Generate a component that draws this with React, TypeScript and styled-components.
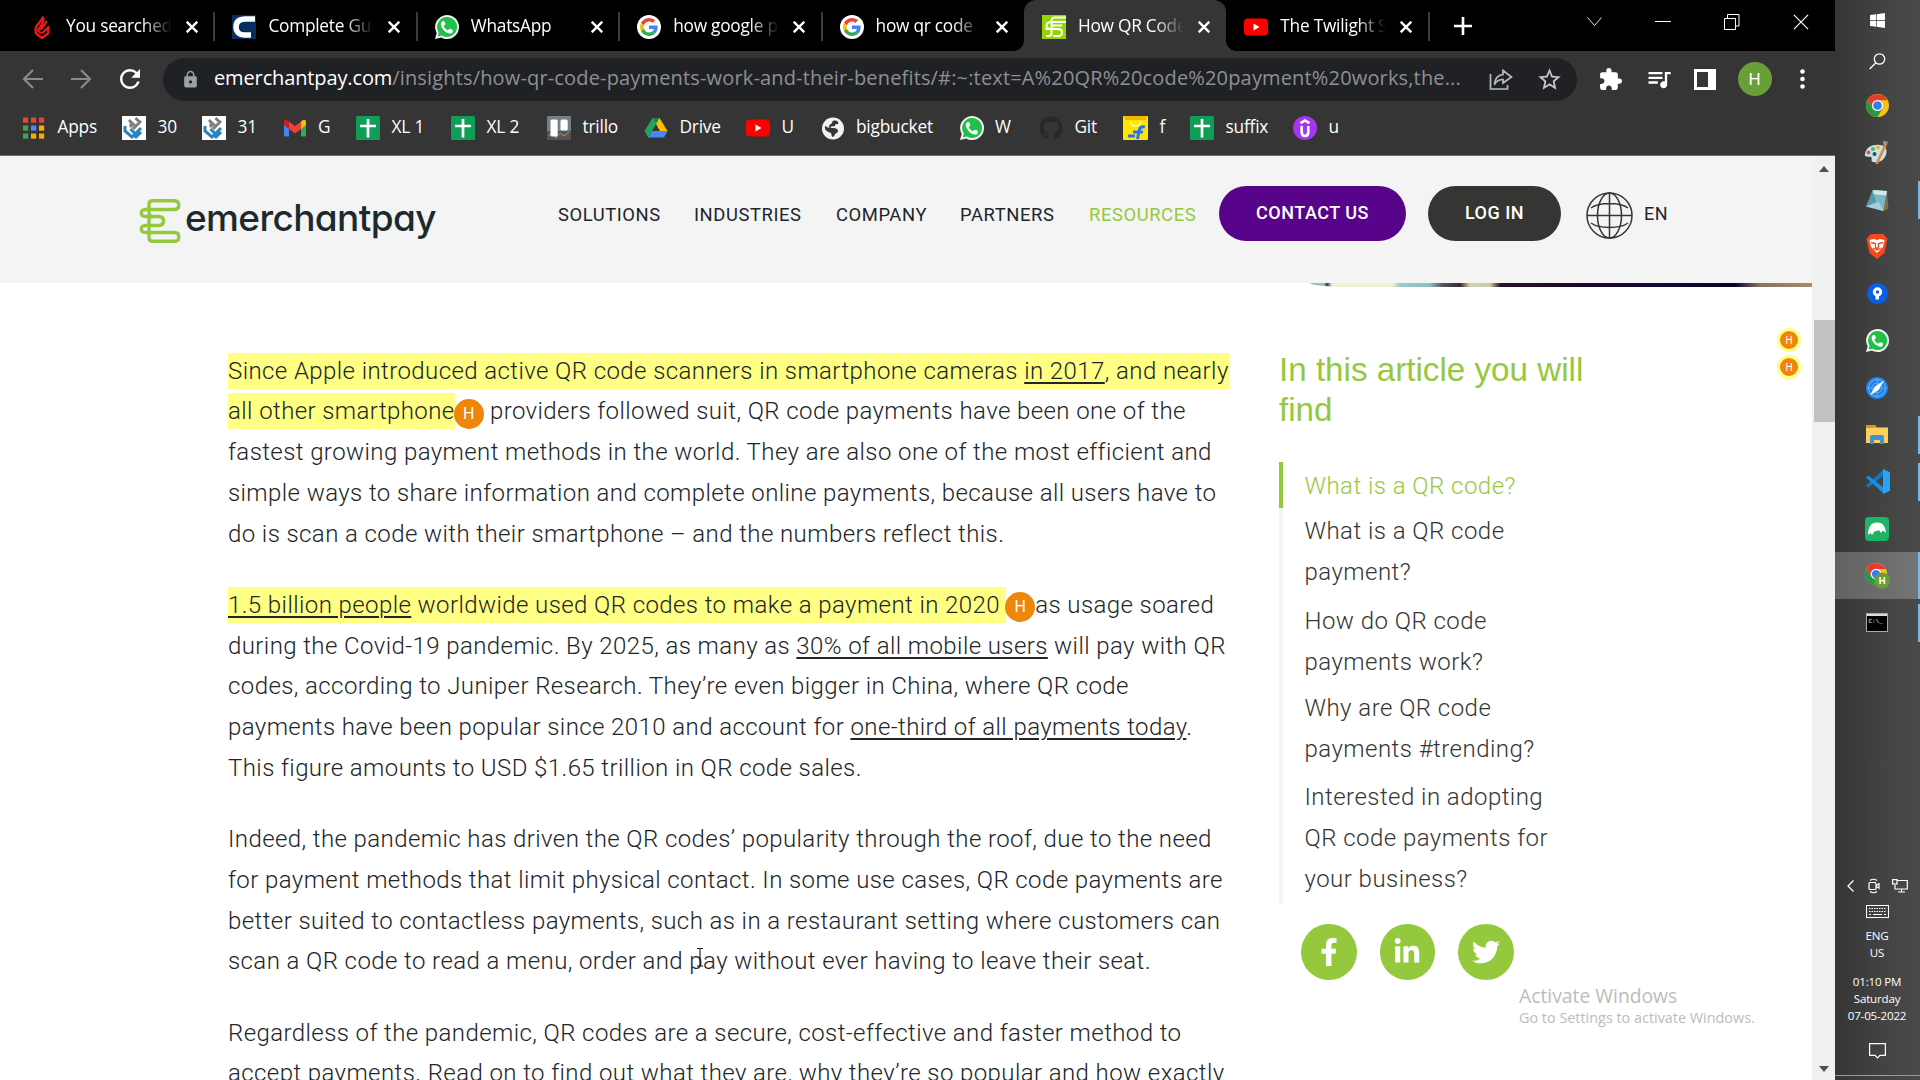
import React from "react";
import styled, { createGlobalStyle, css } from "styled-components";
import { FaFacebookF, FaLinkedinIn, FaTwitter, FaGithub, FaWindows } from "react-icons/fa";
import { MdExtension, MdQueueMusic, MdLock, MdStarBorder, MdRefresh } from "react-icons/md";

const ui = `"Open Sans", "Noto Sans", sans-serif`;
const web = `Roboto, "Liberation Sans", sans-serif`;
const green = "#95c93d";

const GlobalStyle = createGlobalStyle`
  html, body { margin: 0; padding: 0; overflow: hidden; background: #fff; }
  *, *::before, *::after { box-sizing: border-box; }
  svg { display: block; flex: none; }
`;

const Desktop = styled.div`
  display: flex;
  width: 1920px;
  height: 1080px;
  overflow: hidden;
`;

const Browser = styled.div`
  display: flex;
  flex-direction: column;
  width: 1835px;
  height: 1080px;
  flex: none;
`;

/* ---------- Tab strip ---------- */

const TabStrip = styled.div`
  display: flex;
  height: 51px;
  flex: none;
  padding-left: 12px;
  background: #000;
  color: #fff;
  font-family: ${ui};
`;

const Tab = styled.div<{ $active?: boolean; $line?: boolean }>`
  position: relative;
  display: flex;
  align-items: center;
  width: 202.4px;
  height: 51px;
  padding: 2px 0 0 18px;
  flex: none;
  border-radius: 12px 12px 0 0;
  ${(p) =>
    p.$line &&
    css`
      &::after {
        content: "";
        position: absolute;
        right: -1px;
        top: 12px;
        width: 2px;
        height: 29px;
        background: #3c3c3c;
      }
    `}
  ${(p) =>
    p.$active &&
    css`
      background: #353535;
      &::before {
        content: "";
        position: absolute;
        left: -10px;
        right: -10px;
        bottom: 0;
        height: 10px;
        background:
          radial-gradient(circle at 0 0, transparent 9.5px, #353535 10px) left / 10px 10px no-repeat,
          radial-gradient(circle at 100% 0, transparent 9.5px, #353535 10px) right / 10px 10px no-repeat;
      }
    `}
`;

const TabTitle = styled.span`
  width: 106px;
  margin: 0 14px 3px 12px;
  flex: none;
  white-space: nowrap;
  font-size: 17.3px;
  letter-spacing: -0.25px;
  mask-image: linear-gradient(90deg, #000 72%, transparent 100%);
`;

const NewTab = styled.div`
  display: flex;
  align-items: center;
  margin-left: 25px;
`;

const WindowButtons = styled.div`
  display: flex;
  align-items: center;
  gap: 53px;
  height: 43px;
  margin-left: auto;
  padding-right: 26px;
`;

/* ---------- Toolbar ---------- */

const Toolbar = styled.div`
  display: flex;
  align-items: center;
  height: 55px;
  flex: none;
  padding: 1px 0 0 22px;
  background: #353535;
`;

const NavButtons = styled.div`
  display: flex;
  align-items: center;
  gap: 26px;
  width: 141px;

  & > :last-child {
    margin-left: -3px;
  }
`;

const AddressBar = styled.div`
  display: flex;
  align-items: center;
  width: 1414px;
  height: 43px;
  padding: 0 14px 0 18px;
  border-radius: 22px;
  background: #202124;
  color: #9aa0a6;
`;

const Url = styled.div`
  width: 1254px;
  margin: 0 0 3px 14px;
  white-space: nowrap;
  font-family: ${ui};
  font-size: 20px;
  letter-spacing: 0.16px;
  color: #8d9094;
`;

const Domain = styled.span`
  color: #fff;
  letter-spacing: -0.13px;
`;

const AddressActions = styled.div`
  display: flex;
  align-items: center;
  gap: 23px;
  margin-left: auto;
`;

const ToolbarActions = styled.div`
  display: flex;
  align-items: center;
  gap: 21.5px;
  margin-left: 21px;
`;

const Avatar = styled.div`
  display: flex;
  align-items: center;
  justify-content: center;
  width: 34px;
  height: 34px;
  margin-right: 7px;
  border-radius: 50%;
  background: #689f38;
  color: #fff;
  font: 17px ${web};
`;

/* ---------- Bookmarks ---------- */

const BookmarkBar = styled.div`
  display: flex;
  align-items: center;
  height: 50px;
  flex: none;
  padding: 0 0 6px 22px;
  border-bottom: 1px solid #736a6c;
  background: #353535;
  color: #fff;
  font-family: ${ui};
  font-size: 17.3px;
`;

const Bookmark = styled.div<{ $width: number }>`
  display: flex;
  align-items: center;
  gap: 11.5px;
  width: ${(p) => p.$width}px;
  flex: none;
  white-space: nowrap;
  letter-spacing: -0.2px;
  span { margin-bottom: 2px; }
`;

/* ---------- Page ---------- */

const Viewport = styled.div`
  display: flex;
  height: 924px;
`;

const Page = styled.div`
  width: 1812px;
  height: 924px;
  overflow: hidden;
  background: #fff;
  font-family: ${web};
`;

const SiteHeader = styled.header`
  display: flex;
  height: 127px;
  padding-left: 139px;
  background: #f4f4f4;
`;

const Brand = styled.div`
  display: flex;
  align-items: flex-start;
  width: 419px;
  padding-top: 43px;
`;

const BrandName = styled.span`
  margin: -3px 0 0 4px;
  color: #1d2a2d;
  font: 500 37px/44px Inter, sans-serif;
  font-feature-settings: "cv11", "ss03";
  letter-spacing: -0.62px;
`;

const SiteNav = styled.nav`
  display: flex;
  padding-top: 47px;
  color: #212529;
  font-size: 18.4px;
  line-height: 24px;
  letter-spacing: 0.58px;
`;

const NavLink = styled.a<{ $width: number; $current?: boolean }>`
  width: ${(p) => p.$width}px;
  white-space: nowrap;
  ${(p) => p.$current && `color: ${green};`}
`;

const PillButton = styled.button<{ $width: number; $tone: string }>`
  width: ${(p) => p.$width}px;
  height: 55px;
  margin: 30px 22px 0 0;
  padding: 0 0 2px;
  border: 0;
  border-radius: 28px;
  background: ${(p) => p.$tone};
  color: #fff;
  font: 500 18px ${web};
  letter-spacing: 0.5px;
`;

const Language = styled.div`
  display: flex;
  align-items: center;
  gap: 11px;
  height: 48px;
  margin: 35px 0 0 3px;
  color: #212529;
  font-size: 18px;
  letter-spacing: 0.4px;
  span { margin-bottom: 4px; }
`;

const HeroEdge = styled.div`
  width: 502px;
  height: 4px;
  margin-left: 1310px;
  border-bottom-left-radius: 40px 4px;
  background: linear-gradient(
    90deg,
    #8fc4bd 0, #8fc4bd 14px, #283858 17px, #eef3cf 22px, #eef3cf 82px, #96cdc9 90px,
    #8cbcc0 120px, #5a5560 132px, #3c2832 150px, #cfd3ac 160px, #c9cba6 180px,
    #2b1428 190px, #1c0c28 260px, #160838 350px, #0d0226 425px, #8a7460 450px, #a48b68 502px
  );
`;

const Columns = styled.div`
  display: flex;
  padding: 63.5px 0 0 228px;
`;

const Article = styled.article`
  width: 1051px;
  flex: none;
  color: #212529;
  font-size: 24px;
  font-weight: 300;
  line-height: 40.8px;
  letter-spacing: 0.41px;
  white-space: nowrap;
`;

const Paragraph = styled.p`
  margin: 0 0 30.3px;
`;

const Mark = styled.mark`
  padding: 4px 0;
  background: #ffff83;
  color: inherit;
`;

const TextLink = styled.a`
  text-decoration: underline;
  text-decoration-thickness: 2px;
  text-underline-offset: 3px;
`;

const InlineBadge = styled.span`
  display: inline-flex;
  align-items: center;
  justify-content: center;
  width: 30px;
  height: 30px;
  margin: -6px 0 -6px -1px;
  border-radius: 50%;
  background: #ee8609;
  color: #fff;
  font: 16px/30px ${web};
  letter-spacing: 0;
  vertical-align: 0.5px;
`;

const Sidebar = styled.aside`
  width: 330px;
`;

const SidebarTitle = styled.h2`
  margin: -1px 0 32px;
  color: ${green};
  font: 400 33.2px/40px "Liberation Sans", Arial, sans-serif;
  white-space: nowrap;
`;

const Contents = styled.ul`
  margin: 0;
  padding: 0;
  list-style: none;
`;

const ContentsItem = styled.li<{ $current?: boolean; $bottom?: number }>`
  padding: ${(p) => (p.$current ? "4.4px" : "3px")} 0 ${(p) => p.$bottom ?? 1.5}px 21.5px;
  border-left: 4px solid ${(p) => (p.$current ? green : "#f3f3f3")};
  color: ${(p) => (p.$current ? green : "#353633")};
  font-size: 24px;
  font-weight: 300;
  line-height: 41px;
  letter-spacing: 0.46px;
  white-space: nowrap;
`;

const Socials = styled.div`
  display: flex;
  gap: 23px;
  padding: 20px 0 0 22px;
`;

const SocialButton = styled.a`
  display: flex;
  align-items: center;
  justify-content: center;
  width: 55.5px;
  height: 55.5px;
  border-radius: 50%;
  background: ${green};
  color: #fff;
`;

const Activation = styled.div`
  position: absolute;
  left: 1519px;
  top: 982px;
  color: #bcbcbc;
  font-family: ${ui};
  font-size: 19.3px;
  line-height: 27px;
  white-space: nowrap;
`;

const ActivationHint = styled.div`
  font-size: 14.4px;
  line-height: 18px;
`;

const AnnotationRail = styled.div`
  position: absolute;
  left: 1777px;
  top: 328px;
  display: flex;
  flex-direction: column;
  gap: 3px;
`;

const RailBadge = styled.div`
  display: flex;
  align-items: center;
  justify-content: center;
  width: 24px;
  height: 24px;
  border: 3px solid #ffff83;
  border-radius: 50%;
  background: #ee8609;
  color: #fff;
  font: 10px ${web};
`;

const TextCursor = styled.svg`
  position: absolute;
  left: 696px;
  top: 948px;
`;

const Scrollbar = styled.div`
  display: flex;
  flex-direction: column;
  align-items: center;
  width: 23px;
  padding: 10px 0 8px 1px;
  background: #f1f1f1;
`;

const Thumb = styled.div`
  width: 21px;
  height: 102px;
  margin: 148px 0 auto 1px;
  background: #c1c1c1;
`;

/* ---------- Taskbar ---------- */

const Taskbar = styled.div`
  display: flex;
  flex-direction: column;
  width: 85px;
  height: 1080px;
  flex: none;
  background: linear-gradient(90deg, #353535, #444 60%, #494949);
  color: #fff;
  font-family: ${ui};
`;

const Slot = styled.div<{ $height?: number; $open?: boolean; $active?: boolean }>`
  display: grid;
  grid-template-columns: 1fr auto 1fr;
  align-items: center;
  height: ${(p) => p.$height ?? 47}px;
  flex: none;
  ${(p) => p.$active && "background: linear-gradient(90deg, #626262, #757575);"}

  & > svg {
    grid-column: 2;
    margin-right: 1px;
  }

  ${(p) =>
    p.$open &&
    css`
      &::after {
        content: "";
        grid-column: 3;
        justify-self: end;
        width: 2px;
        height: ${p.$active ? 47 : 38}px;
        background: #76b9ed;
      }
    `}
`;

const Tray = styled.div`
  display: flex;
  flex-direction: column;
  align-items: center;
  height: 204px;
  margin-top: auto;
  border-bottom: 1px solid #9a9a9a;
  font-size: 11.6px;
  line-height: 17px;
  letter-spacing: -0.2px;
  text-align: center;
`;

const TrayRow = styled.div`
  display: flex;
  align-items: center;
  gap: 14px;
  height: 28px;
  margin: 0 0 5px;

  & > :last-child {
    margin-left: -2px;
  }
`;

const Clock = styled.div<{ $gap?: number }>`
  margin: ${(p) => p.$gap ?? 13}px 1px 0 0;
  white-space: nowrap;
`;

const ActionCenter = styled.svg`
  margin-top: 19px;
`;

const BottomEdge = styled.div`
  height: 4px;
  flex: none;
`;

/* ---------- Icons ---------- */

const Cross = ({ size = 12, width = 2.4 }: { size?: number; width?: number }) => (
  <svg width={size} height={size} viewBox="0 0 12 12">
    <path d="M.7.7l10.6 10.6M11.3.7L.7 11.3" stroke="#fff" strokeWidth={width} />
  </svg>
);

const Flame = () => (
  <svg width="24" height="24" viewBox="0 0 24 24" fill="none" stroke="#e8191f" strokeWidth="2.3" strokeLinejoin="round">
    <path d="M12.500 1.500C13.500 6 5.500 8.500 5.500 15l.5 3.500 6 4.500 6-4.500.5-6.500-6.500 6.500M12.500 1.500c1.500 3 1.500 5-.5 7.500l-4 6.500 3 3M16 6c1 3-5 6-5 9" />
  </svg>
);

const CLetter = () => (
  <svg width="24" height="24" viewBox="0 0 24 24">
    <rect width="24" height="24" fill="#062f60" />
    <path d="M23 4H13.500C7 4 4 7 4 12s3.500 8 8.500 8H19" fill="none" stroke="#fff" strokeWidth="5.500" />
  </svg>
);

const WhatsApp = ({ size = 24 }: { size?: number }) => (
  <svg width={size} height={size} viewBox="0 0 24 24">
    <path d="M12 0a12 12 0 0 1 0 24c-2 0-4-.5-5.700-1.500L0 24l1.700-6A12 12 0 0 1 12 0z" fill="#f4f4f4" />
    <path d="M12 2a10 10 0 1 1-5.200 18.500L2.700 21.500l1.100-4A10 10 0 0 1 12 2z" fill="#20c04a" />
    <path
      transform="translate(4.600 4.600) scale(.62)"
      d="M6.600 10.800c1.400 2.800 3.800 5.100 6.600 6.600l2.200-2.200c.3-.3.7-.4 1-.2 1.100.4 2.300.6 3.600.6.6 0 1 .4 1 1V20c0 1.500-2 2.500-4 2.500C10.600 22.500 2 14 2 7c0-2 1.500-4.500 3-4.500h2c.6 0 1 .4 1.200 1 .2 1.300.6 2.500 1 3.600.1.300 0 .7-.2 1z"
      fill="#fff"
    />
  </svg>
);

const Google = () => (
  <svg width="24" height="24" viewBox="0 0 24 24">
    <circle cx="12" cy="12" r="12" fill="#fff" />
    <g transform="translate(3 3) scale(.375)">
      <path fill="#EA4335" d="M24 9.500c3.540 0 6.710 1.220 9.210 3.600l6.850-6.850C35.900 2.380 30.470 0 24 0 14.620 0 6.510 5.380 2.560 13.220l7.980 6.190C12.430 13.720 17.740 9.500 24 9.500z" />
      <path fill="#4285F4" d="M46.980 24.550c0-1.570-.15-3.090-.38-4.550H24v9.020h12.940c-.58 2.960-2.260 5.480-4.780 7.180l7.730 6c4.510-4.180 7.090-10.360 7.090-17.650z" />
      <path fill="#FBBC05" d="M10.530 28.590c-.48-1.450-.76-2.990-.76-4.590s.27-3.140.76-4.590l-7.980-6.190C.92 16.460 0 20.120 0 24c0 3.880.92 7.540 2.560 10.780l7.970-6.190z" />
      <path fill="#34A853" d="M24 48c6.480 0 11.930-2.130 15.890-5.810l-7.730-6c-2.150 1.450-4.920 2.300-8.160 2.300-6.260 0-11.570-4.220-13.470-9.910l-7.980 6.190C6.510 42.620 14.620 48 24 48z" />
    </g>
  </svg>
);

const EmpMark = () => (
  <svg width="24" height="24" viewBox="0 0 24 24">
    <rect width="24" height="24" fill="#95d600" />
    <path
      d="M24 2.500H13q-3.500 0-3.500 3V18q0 3-3 3H4M24 7H9q-4.500 0-4.500 3.500T9 14h7q4 0 4 3.500T16 21H11M20 10.500H9M16 14H3"
      fill="none"
      stroke="#fff"
      strokeWidth="2"
    />
  </svg>
);

const YouTube = () => (
  <svg width="24" height="24" viewBox="0 0 24 24">
    <rect y="3.500" width="24" height="17" rx="4" fill="#f00" />
    <path d="M9.500 8.500v7l6-3.500z" fill="#fff" />
  </svg>
);

const AppsGrid = () => (
  <svg width="24" height="24" viewBox="0 0 24 24">
    {["#ea4335", "#ea4335", "#ea4335", "#34a853", "#4c8bf5", "#f9ab00", "#34a853", "#f9ab00", "#f9ab00"].map((c, i) => (
      <rect key={i} x={1 + (i % 3) * 8} y={1.500 + Math.floor(i / 3) * 8} width="5.200" height="5.200" fill={c} />
    ))}
  </svg>
);

const Hacker = () => (
  <svg width="24" height="24" viewBox="0 0 24 24" fill="none" strokeWidth="3">
    <rect width="24" height="24" fill="#fff" />
    <path d="M7 4l6 6M11 13l8-8M13.500 2l4.500 4.500M9 6.500v5" stroke="#7b8084" />
    <path d="M3 10v5l7 6 9-9M8.500 13l4 4M15 14l3 3-5 5" stroke="#2f7fb8" />
  </svg>
);

const Gmail = () => (
  <svg width="24" height="24" viewBox="0 0 24 24">
    <path d="M1 8v11q0 1.500 1.500 1.500H6V11z" fill="#4285f4" />
    <path d="M23 8v11q0 1.500-1.500 1.500H18V11z" fill="#34a853" />
    <path d="M18 5.500l2-1.500q3-1 3 2v3l-5 4z" fill="#fbbc04" />
    <path d="M6 5.500L4 4Q1 3 1 6v3l5 4z" fill="#c5221f" />
    <path d="M6 5.500l6 4.600 6-4.600V13l-6 4.500L6 13z" fill="#ea4335" />
  </svg>
);

const Sheet = () => (
  <svg width="24" height="24" viewBox="0 0 24 24">
    <rect width="24" height="24" rx="1.500" fill="#109d58" />
    <path d="M12 3v18.500M4 10h16" stroke="#fff" strokeWidth="2.700" />
  </svg>
);

const Trello = () => (
  <svg width="24" height="24" viewBox="0 0 24 24">
    <rect width="24" height="24" rx="1" fill="#71808a" />
    <path d="M0 15h24v9H0z" fill="#59514e" />
    <path d="M2 20l3-4 4 6 4-5 4 3 5-4" stroke="#a49a94" fill="none" />
    <rect x="3.500" y="3.500" width="7.200" height="17" rx="1.500" fill="#fff" />
    <rect x="13.500" y="3.500" width="7.200" height="11" rx="1.500" fill="#fff" />
  </svg>
);

const Drive = () => (
  <svg width="24" height="24" viewBox="0 0 24 24">
    <path d="M8.500 2h7L8 15l-3.800 6.500L.5 15z" fill="#1fa463" />
    <path d="M8.500 2h7l8 13h-7.500z" fill="#ffbf00" />
    <path d="M8.500 2L12 8l3.500-6z" fill="#14884c" />
    <path d="M8 15h15.500L20 21.500H4.200z" fill="#4688f4" />
  </svg>
);

const Globe = () => (
  <svg width="24" height="24" viewBox="0 0 24 24">
    <circle cx="12" cy="12.500" r="11" fill="#f2f2f2" />
    <path d="M13 4.500c4 0 5 2 4 3.500-2 0-3 0-3 2l-4 .5c-1 1 0 1.500 2 1.500 3 0 5 1 5 3s-3 2-3.500 4.500c-1 2-3 1.500-3-.5 0-2-1-2.500-3-3C4.500 15 3.500 13 4 10c2 1 3 2 4.500 1.500-1-2 0-3 1.500-3.500s.5-3 3-3.500z" fill="#353535" />
  </svg>
);

const Flipkart = () => (
  <svg width="25" height="24" viewBox="0 0 25 24">
    <rect width="25" height="24" rx="1" fill="#ffe500" />
    <path d="M2 0h21v4H2z" fill="#f8b400" />
    <path d="M7 5q1 5 5.500 5T18 5" stroke="#fff6a0" strokeWidth="1.500" fill="none" />
    <path d="M22 11q-5-1-6 4l-1.500 8M10 16h10M5 20h7" stroke="#2874f0" strokeWidth="3" fill="none" />
  </svg>
);

const Udemy = () => (
  <svg width="24" height="24" viewBox="0 0 24 24">
    <circle cx="12" cy="12" r="12" fill="#a435f0" />
    <path d="M7.500 7.200L12 4.500l4.500 2.700M8.700 10v6q0 4 3.300 4t3.300-4v-6" stroke="#fff" strokeWidth="2.600" fill="none" />
  </svg>
);

const ChromeDisc = () => (
  <>
    <circle cx="12" cy="12" r="12" fill="#fbc116" />
    <path d="M1.600 6A12 12 0 0 0 12 24l5.200-9-10.400 0z" fill="#279847" />
    <path d="M6.800 15L1.600 6A12 12 0 0 1 22.400 6.500H12z" fill="#e33b2e" />
    <circle cx="12" cy="12" r="5.800" fill="#fff" />
    <circle cx="12" cy="12" r="4.500" fill="#317ef3" />
  </>
);

const Chrome = () => (
  <svg width="23" height="23" viewBox="0 0 24 24">
    <ChromeDisc />
  </svg>
);

const BrandMark = () => (
  <svg width="42" height="44" viewBox="0 0 41 44" fill="none" stroke={green} strokeWidth="3.400">
    <path d="M21 17.500H13q-3.500 0-3.500-3.500V5q0-3.300 3.500-3.300h22q4.300 0 4.300 4.300t-4.300 4.500H7Q1.700 10.500 1.700 14T7 17.500h12q5 0 5 4.500t-5 4.500H7q-5.300 0-5.300 3.500T7 33.500h28q4.300 0 4.300 4.500t-4.300 4.300H13q-3.500 0-3.500-3.300V20.500q0-3 3.500-3" />
  </svg>
);

const WireGlobe = () => (
  <svg width="47" height="47" viewBox="0 0 47 47" fill="none" stroke="#353633" strokeWidth="1.500">
    <circle cx="23.500" cy="23.500" r="22.500" />
    <ellipse cx="23.500" cy="23.500" rx="12" ry="22.500" />
    <path d="M23.500 1v45M1 23.500h45M5 16q6-4.500 18.500-4.500T42 16M5 31q6 4.500 18.500 4.500T42 31" />
  </svg>
);

const Paint = () => (
  <svg width="26" height="25" viewBox="0 0 26 25">
    <path d="M1 14C2 7 9 4 16 5s8 7 5 12-9 6-12 5 0-4-2-5-7 1-6-3z" fill="#c5e2f3" />
    <circle cx="4.500" cy="12.500" r="2" fill="#e2574c" />
    <circle cx="9" cy="9" r="2" fill="#54b948" />
    <circle cx="14" cy="7.500" r="2" fill="#f0b429" />
    <circle cx="10.500" cy="14" r="2" fill="#334c5c" />
    <path d="M12.500 24L21 6" stroke="#e28a2b" strokeWidth="2.600" />
    <path d="M19.500 6.500L19 1l5 .5-2 6z" fill="#b98a5f" />
  </svg>
);

const Notepad = () => (
  <svg width="24" height="24" viewBox="0 0 24 24">
    <path d="M22 4l1.500 17-5 2z" fill="#8b6b38" />
    <path d="M8 2l14 1-3.500 20L1 18.500z" fill="#79b9c6" />
    <path d="M8 2l14 1-.8 4.500L6.500 6z" fill="#cfe9ef" />
    <path d="M14 14l4.500 9L1 18.500z" fill="#c5dfe4" opacity=".6" />
    <path d="M8 2l3 12-10 4.500z" fill="#3f8392" opacity=".6" />
  </svg>
);

const BraveIcon = () => (
  <svg width="22" height="25" viewBox="0 0 22 25">
    <path d="M5 0h12l2.500 2.500L21.500 5 18.500 19 11 25 3.500 19 .5 5l2-2.500z" fill="#f4481e" />
    <path d="M3.500 6L8 5l3 1 3-1 4.500 1-1.500 7-3.500 3.500L11 19l-2.500-2.500L5 13z" fill="#fff" />
    <path d="M5 8.500l4 1M17 8.500l-4 1M9.500 9v4L11 15l1.500-2V9M7 14l4 2 4-2" stroke="#f4481e" strokeWidth="1.300" fill="none" />
  </svg>
);

const Sourcetree = () => (
  <svg width="21" height="21" viewBox="0 0 21 21">
    <circle cx="10.500" cy="10.500" r="10.500" fill="#0b5fe5" />
    <circle cx="10.500" cy="9" r="3.200" fill="none" stroke="#fff" strokeWidth="3" />
    <path d="M8.500 12h3.500v4.500H8.500z" fill="#fff" />
  </svg>
);

const Compass = () => (
  <svg width="22" height="22" viewBox="0 0 22 22">
    <circle cx="11" cy="11" r="11" fill="#1b83ea" />
    <circle cx="11" cy="11" r="8.500" fill="none" stroke="#8ec6fb" strokeWidth=".8" />
    <circle cx="11" cy="11" r="5" fill="none" stroke="#6cb2f5" strokeWidth=".8" />
    <path d="M11 1v20M1 11h20" stroke="#6cb2f5" strokeWidth=".7" />
    <path d="M18 3.500L12.800 12.800 4 18.500l5-9z" fill="#fff" />
  </svg>
);

const Explorer = () => (
  <svg width="22" height="19" viewBox="0 0 22 19">
    <path d="M0 1h9l2 1.500H22V18H0z" fill="#fdd05e" />
    <path d="M0 0h9.500v3H0z" fill="#dd9a0f" />
    <path d="M4 19v-7q0-2 2-2h10q2 0 2 2v7h-4v-4H8v4z" fill="#3f92d6" />
  </svg>
);

const VSCode = () => (
  <svg width="25" height="25" viewBox="0 0 25 25">
    <path d="M18 1L1 16.500l2.200 2L18 7z" fill="#0a7bc4" />
    <path d="M18 24L1 8.500l2.200-2L18 18z" fill="#1490df" />
    <path d="M18 0l7 3.200v18.600L18 25z" fill="#29a4f4" />
  </svg>
);

const Manatee = () => (
  <svg width="24" height="24" viewBox="0 0 24 24">
    <rect width="24" height="24" rx="4" fill="#1db466" />
    <path d="M3 18C3 12 5 5.500 12 5.500S20 10 21 16l-3-2.500-2 2.500-1.500-2.500c-2 0-3 .5-5 1L7 18l-1.500-2z" fill="#fff" />
  </svg>
);

const ActiveChrome = () => (
  <svg width="26" height="26" viewBox="0 0 26 26">
    <g transform="translate(1 0) scale(.92)">
      <ChromeDisc />
    </g>
    <circle cx="18" cy="17.500" r="8" fill="#689f38" />
    <text x="18" y="21" textAnchor="middle" fontSize="9.500" fontWeight="700" fill="#fff" fontFamily="Roboto">H</text>
  </svg>
);

const Terminal = () => (
  <svg width="22" height="19" viewBox="0 0 22 19">
    <rect x=".5" y=".5" width="21" height="18" fill="#000" stroke="#a8a8a8" />
    <path d="M1 1h20v2H1z" fill="#d7dce2" />
    <text x="2.500" y="9.500" fontSize="6" fill="#fff" fontFamily="Liberation Mono">C:\_</text>
  </svg>
);

/* ---------- Data ---------- */

const tabs = [
  { title: "You searched", icon: <Flame />, line: true },
  { title: "Complete Gu", icon: <CLetter />, line: true },
  { title: "WhatsApp", icon: <WhatsApp />, line: true },
  { title: "how google p", icon: <Google />, line: true },
  { title: "how qr code", icon: <Google /> },
  { title: "How QR Code", icon: <EmpMark />, active: true },
  { title: "The Twilight S", icon: <YouTube />, line: true },
];

const bookmarks = [
  { label: "Apps", width: 100, icon: <AppsGrid /> },
  { label: "30", width: 80, icon: <Hacker /> },
  { label: "31", width: 80.5, icon: <Hacker /> },
  { label: "G", width: 73.5, icon: <Gmail /> },
  { label: "XL 1", width: 95, icon: <Sheet /> },
  { label: "XL 2", width: 96, icon: <Sheet /> },
  { label: "trillo", width: 97, icon: <Trello /> },
  { label: "Drive", width: 102, icon: <Drive /> },
  { label: "U", width: 74.5, icon: <YouTube /> },
  { label: "bigbucket", width: 139, icon: <Globe /> },
  { label: "W", width: 79.5, icon: <WhatsApp /> },
  { label: "Git", width: 84, icon: <FaGithub size={24} color="#24292e" /> },
  { label: "f", width: 67, icon: <Flipkart /> },
  { label: "suffix", width: 103, icon: <Sheet /> },
  { label: "u", width: 60, icon: <Udemy /> },
];

const contents = [
  { lines: ["What is a QR code?"], current: true },
  { lines: ["What is a QR code", "payment?"], bottom: 5 },
  { lines: ["How do QR code", "payments work?"], bottom: 2 },
  { lines: ["Why are QR code", "payments #trending?"], bottom: 4 },
  { lines: ["Interested in adopting", "QR code payments for", "your business?"], bottom: 4 },
];

const taskApps: { icon: React.ReactNode; open?: boolean; active?: boolean }[] = [
  { icon: <Chrome /> },
  { icon: <Paint /> },
  { icon: <Notepad />, open: true },
  { icon: <BraveIcon /> },
  { icon: <Sourcetree /> },
  { icon: <WhatsApp size={23} /> },
  { icon: <Compass /> },
  { icon: <Explorer />, open: true },
  { icon: <VSCode />, open: true },
  { icon: <Manatee /> },
  { icon: <ActiveChrome />, open: true, active: true },
  { icon: <Terminal />, open: true },
];

export default function App() {
  return (
    <Desktop>
      <GlobalStyle />
      <Browser>
        <TabStrip>
          {tabs.map((t) => (
            <Tab key={t.title} $active={t.active} $line={t.line}>
              {t.icon}
              <TabTitle>{t.title}</TabTitle>
              <Cross />
            </Tab>
          ))}
          <NewTab>
            <svg width="18" height="18" viewBox="0 0 18 18">
              <path d="M9 0v18M0 9h18" stroke="#fff" strokeWidth="2.600" />
            </svg>
          </NewTab>
          <WindowButtons>
            <svg width="15" height="10" viewBox="0 0 15 10" fill="none" stroke="#ddd">
              <path d="M.5.5l7 8 7-8" />
            </svg>
            <svg width="16" height="16" viewBox="0 0 16 16">
              <path d="M0 7.500h16" stroke="#fff" />
            </svg>
            <svg width="16" height="16" viewBox="0 0 16 16" fill="none" stroke="#fff">
              <path d="M.5 4.500h11v11H.5zM3.500 4.500v-4h11.500v11.500h-3.500" />
            </svg>
            <Cross size={16} width={0.9} />
          </WindowButtons>
        </TabStrip>

        <Toolbar>
          <NavButtons>
            <svg width="22" height="20" viewBox="0 0 22 20" fill="none" stroke="#8a8a8a" strokeWidth="2.200">
              <path d="M21 10H2M11 1l-9 9 9 9" />
            </svg>
            <svg width="22" height="20" viewBox="0 0 22 20" fill="none" stroke="#8a8a8a" strokeWidth="2.200">
              <path d="M1 10h19M11 1l9 9-9 9" />
            </svg>
            <MdRefresh size={30} color="#fff" />
          </NavButtons>
          <AddressBar>
            <MdLock size={19} />
            <Url>
              <Domain>emerchantpay.com</Domain>
              /insights/how-qr-code-payments-work-and-their-benefits/#:~:text=A%20QR%20code%20payment%20works,the...
            </Url>
            <AddressActions>
              <svg width="24" height="21" viewBox="0 0 24 21" fill="none" stroke="#b8bbbf" strokeWidth="1.700">
                <path d="M1.500 5v15h17v-4M14 1.500l8.500 6.500-8.500 6v-3.500q-6 0-8.500 5 .5-9 8.500-10z" />
              </svg>
              <MdStarBorder size={27} color="#c4c7cb" />
            </AddressActions>
          </AddressBar>
          <ToolbarActions>
            <MdExtension size={25} color="#fff" />
            <MdQueueMusic size={28} color="#fff" />
            <svg width="22" height="21" viewBox="0 0 22 21">
              <path d="M0 0h22v21H0zM3 3v15h11V3z" fill="#fff" fillRule="evenodd" />
            </svg>
            <Avatar>H</Avatar>
            <svg width="5" height="20" viewBox="0 0 5 20" fill="#fff">
              <circle cx="2.500" cy="2.500" r="2.300" />
              <circle cx="2.500" cy="10" r="2.300" />
              <circle cx="2.500" cy="17.500" r="2.300" />
            </svg>
          </ToolbarActions>
        </Toolbar>

        <BookmarkBar>
          {bookmarks.map((b) => (
            <Bookmark key={b.label} $width={b.width}>
              {b.icon}
              <span>{b.label}</span>
            </Bookmark>
          ))}
        </BookmarkBar>

        <Viewport>
          <Page>
            <SiteHeader>
              <Brand>
                <BrandMark />
                <BrandName>emerchantpay</BrandName>
              </Brand>
              <SiteNav>
                <NavLink $width={136}>SOLUTIONS</NavLink>
                <NavLink $width={142}>INDUSTRIES</NavLink>
                <NavLink $width={124}>COMPANY</NavLink>
                <NavLink $width={129}>PARTNERS</NavLink>
                <NavLink $width={130} $current>RESOURCES</NavLink>
              </SiteNav>
              <PillButton $width={187} $tone="#57048a">CONTACT US</PillButton>
              <PillButton $width={133} $tone="#353633">LOG IN</PillButton>
              <Language>
                <WireGlobe />
                <span>EN</span>
              </Language>
            </SiteHeader>
            <HeroEdge />
            <Columns>
              <Article>
                <Paragraph>
                  <Mark>
                    Since Apple introduced active QR code scanners in smartphone cameras <TextLink>in 2017</TextLink>, and nearly
                    <br />
                    all other smartphone
                  </Mark>
                  <InlineBadge>H</InlineBadge> providers followed suit, QR code payments have been one of the
                  <br />
                  fastest growing payment methods in the world. They are also one of the most efficient and
                  <br />
                  simple ways to share information and complete online payments, because all users have to
                  <br />
                  do is scan a code with their smartphone – and the numbers reflect this.
                </Paragraph>
                <Paragraph>
                  <Mark>
                    <TextLink>1.5 billion people</TextLink> worldwide used QR codes to make a payment in 2020{" "}
                  </Mark>
                  <InlineBadge>H</InlineBadge>as usage soared
                  <br />
                  during the Covid-19 pandemic. By 2025, as many as <TextLink>30% of all mobile users</TextLink> will pay with QR
                  <br />
                  codes, according to Juniper Research. They’re even bigger in China, where QR code
                  <br />
                  payments have been popular since 2010 and account for <TextLink>one-third of all payments today</TextLink>.
                  <br />
                  This figure amounts to USD $1.65 trillion in QR code sales.
                </Paragraph>
                <Paragraph>
                  Indeed, the pandemic has driven the QR codes’ popularity through the roof, due to the need
                  <br />
                  for payment methods that limit physical contact. In some use cases, QR code payments are
                  <br />
                  better suited to contactless payments, such as in a restaurant setting where customers can
                  <br />
                  scan a QR code to read a menu, order and pay without ever having to leave their seat.
                </Paragraph>
                <Paragraph>
                  Regardless of the pandemic, QR codes are a secure, cost-effective and faster method to
                  <br />
                  accept payments. Read on to find out what they are, why they’re so popular and how exactly
                </Paragraph>
              </Article>
              <Sidebar>
                <SidebarTitle>
                  In this article you will
                  <br />
                  find
                </SidebarTitle>
                <Contents>
                  {contents.map((c) => (
                    <ContentsItem key={c.lines.join()} $current={c.current} $bottom={c.bottom}>
                      {c.lines.map((l) => (
                        <div key={l}>{l}</div>
                      ))}
                    </ContentsItem>
                  ))}
                </Contents>
                <Socials>
                  <SocialButton><FaFacebookF size={28} /></SocialButton>
                  <SocialButton><FaLinkedinIn size={28} /></SocialButton>
                  <SocialButton><FaTwitter size={28} /></SocialButton>
                </Socials>
              </Sidebar>
            </Columns>
          </Page>
          <Scrollbar>
            <svg width="10" height="6" viewBox="0 0 10 6"><path d="M0 6l5-6 5 6z" fill="#505050" /></svg>
            <Thumb />
            <svg width="10" height="6" viewBox="0 0 10 6"><path d="M0 0l5 6 5-6z" fill="#505050" /></svg>
          </Scrollbar>
        </Viewport>
      </Browser>

      <Taskbar>
        <Slot $height={40}><FaWindows size={17} /></Slot>
        <Slot $height={42}>
          <svg width="17" height="17" viewBox="0 0 17 17" fill="none" stroke="#fff" strokeWidth="1.300">
            <circle cx="10.500" cy="6" r="5.200" />
            <path d="M6.800 9.700L.7 16" />
          </svg>
        </Slot>
        {taskApps.map((a, i) => (
          <Slot key={i} $open={a.open} $active={a.active}>{a.icon}</Slot>
        ))}
        <Tray>
          <TrayRow>
            <svg width="7" height="12" viewBox="0 0 7 12" fill="none" stroke="#fff" strokeWidth="1.300"><path d="M6.500.5L1 6l5.500 5.500" /></svg>
            <svg width="12" height="16" viewBox="0 0 12 16" fill="none" stroke="#fff" strokeWidth="1.200">
              <rect x="1" y="4.500" width="7" height="7" rx="1" />
              <path d="M8 7.500l3-1.800v4.600L8 8.500M2 2.500Q5.500 0 9 2.500M2 13.500Q5.500 16 9 13.500" />
            </svg>
            <svg width="16" height="14" viewBox="0 0 16 14" fill="none" stroke="#fff" strokeWidth="1.200">
              <path d="M5 1.500h10.300v8.500H3V6M6 13h7M9.500 10v3" />
              <rect x=".6" y=".6" width="4.400" height="4.400" />
            </svg>
          </TrayRow>
          <svg width="23" height="13" viewBox="0 0 23 13" fill="none" stroke="#fff">
            <rect x=".5" y=".5" width="22" height="12" />
            <path d="M3 3.500h17M3 6.500h17" strokeDasharray="1.500 1" />
            <path d="M3 9.500h2M7 9.500h9M18 9.500h2" />
          </svg>
          <Clock $gap={9}>ENG<br />US</Clock>
          <Clock $gap={12}>01:10 PM<br />Saturday<br />07-05-2022</Clock>
          <ActionCenter width="17" height="16" viewBox="0 0 17 16" fill="none" stroke="#fff" strokeWidth="1.200">
            <path d="M.6.600h15.800v11.800H11L8.500 15 6 12.400H.6z" />
          </ActionCenter>
        </Tray>
        <BottomEdge />
      </Taskbar>

      <AnnotationRail>
        <RailBadge>H</RailBadge>
        <RailBadge>H</RailBadge>
      </AnnotationRail>
      <Activation>
        Activate Windows
        <ActivationHint>Go to Settings to activate Windows.</ActivationHint>
      </Activation>
      <TextCursor width="8" height="19" viewBox="0 0 8 19" fill="none" stroke="#000">
        <path d="M1 .5h2.500L4 1l.5-.5H7M4 1v16.500M1 18h2.500l.5-.5.500.5H7" />
      </TextCursor>
    </Desktop>
  );
}
